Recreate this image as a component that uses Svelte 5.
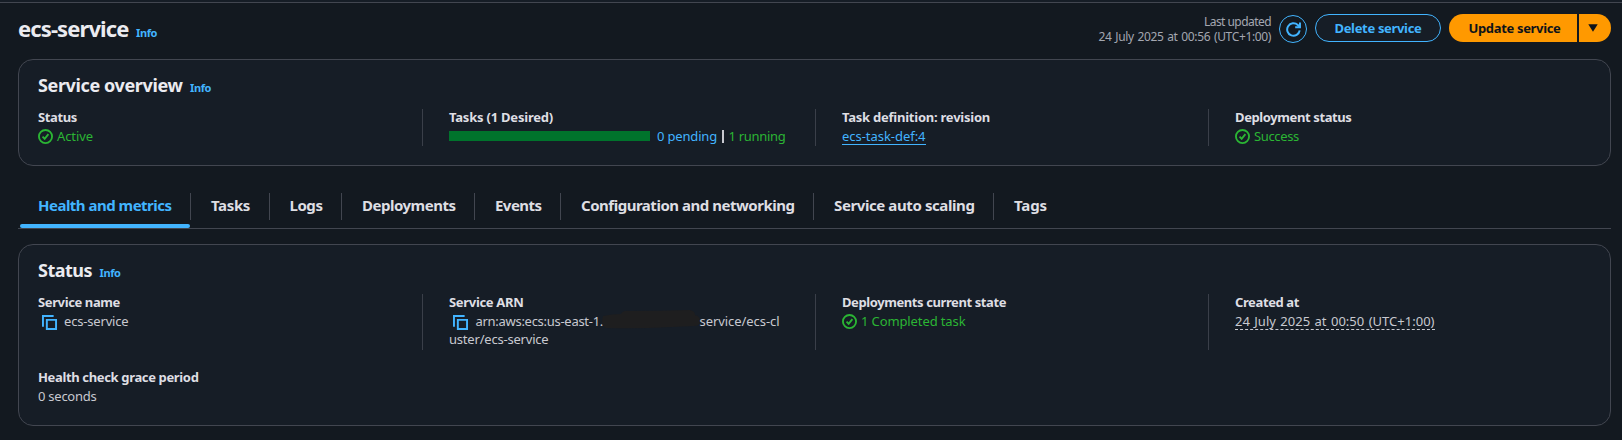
<script>
  const tabs = [
    ['Health and metrics', 133.5], ['Tasks', 39], ['Logs', 33], ['Deployments', 93.5],
    ['Events', 46.5], ['Configuration and networking', 213.5], ['Service auto scaling', 140.5], ['Tags', 33]
  ];

  // Tracks the text so that it fills the given width.
  function fit(node, width) {
    node.style.letterSpacing = '0';
    const natural = node.getBoundingClientRect().width;
    node.style.letterSpacing = (width - natural) / node.textContent.length + 'px';
  }
</script>

{#snippet check()}
  <svg class="check" viewBox="0 0 16 16"><circle cx="8" cy="8" r="7" /><path d="M4.8 8.2l2.3 2.2 4-4.9" /></svg>
{/snippet}
{#snippet copy()}
  <svg class="copy" viewBox="0 0 16 16"><path d="M1 12V1h11M5 5h9.5v9.5H5z" /></svg>
{/snippet}

<div class="page">
  <header>
    <h1><span use:fit={110.5}>ecs-service</span></h1>
    <a class="info title-info"><span use:fit={21}>Info</span></a>
    <div class="updated">
      <div><span use:fit={67}>Last updated</span></div>
      <div><span class="date" use:fit={172.5}>24 July 2025 at 00:56 (UTC+1:00)</span></div>
    </div>
    <button class="refresh" aria-label="Refresh">
      <svg viewBox="0 0 16 16"><path d="M14.6 9A6.7 6.7 0 1 1 12.6 3.2L14.2 4.8" /><path d="M14.9 .6v5.1H9.8" /></svg>
    </button>
    <button class="delete"><span use:fit={87}>Delete service</span></button>
    <button class="update"><span use:fit={92}>Update service</span></button>
    <button class="more" aria-label="More actions"><svg viewBox="0 0 10 8"><path d="M0.3 .3h9.4L5 7.7z" /></svg></button>
  </header>

  <section class="overview">
    <div class="heading"><h2><span use:fit={144.5}>Service overview</span></h2><a class="info"><span use:fit={21}>Info</span></a></div>
    <div class="grid">
      <div class="cell">
        <div class="label"><span use:fit={39}>Status</span></div>
        <div class="value ok">{@render check()}<span use:fit={36}>Active</span></div>
      </div>
      <div class="cell">
        <div class="label"><span use:fit={104}>Tasks (1 Desired)</span></div>
        <div class="value tasks"><i class="bar"></i><span class="blue" use:fit={60}>0 pending</span><i class="sep"></i><span class="green" use:fit={57}>1 running</span></div>
      </div>
      <div class="cell">
        <div class="label"><span use:fit={148}>Task definition: revision</span></div>
        <div class="value"><a class="link"><span use:fit={83.5}>ecs-task-def:4</span></a></div>
      </div>
      <div class="cell">
        <div class="label"><span use:fit={116.5}>Deployment status</span></div>
        <div class="value ok">{@render check()}<span use:fit={45}>Success</span></div>
      </div>
    </div>
  </section>

  <nav>
    {#each tabs as [name, width], i}
      <div class="tab" class:active={i === 0}><span use:fit={width}>{name}</span></div>
    {/each}
  </nav>

  <section class="status">
    <div class="heading"><h2><span use:fit={54}>Status</span></h2><a class="info"><span use:fit={21}>Info</span></a></div>
    <div class="grid">
      <div class="cell">
        <div class="label"><span use:fit={82}>Service name</span></div>
        <div class="value">{@render copy()}<span use:fit={64.5}>ecs-service</span></div>
      </div>
      <div class="cell">
        <div class="label"><span use:fit={74.5}>Service ARN</span></div>
        <div class="value">{@render copy()}<span use:fit={127.5}>arn:aws:ecs:us-east-1.</span><svg class="smudge" viewBox="0 0 98 19"><path d="M1 6Q10 4 19 4Q21 0 28 1Q58 1 88 0Q93 1 93 5Q98 6 98 11Q98 16 92 16L70 17Q35 19 4 18Q0 16 0 11z" /></svg><span use:fit={80}>service/ecs-cl</span></div>
        <div class="value"><span use:fit={99.5}>uster/ecs-service</span></div>
      </div>
      <div class="cell">
        <div class="label"><span use:fit={164}>Deployments current state</span></div>
        <div class="value ok">{@render check()}<span use:fit={104.5}>1 Completed task</span></div>
      </div>
      <div class="cell">
        <div class="label"><span use:fit={64}>Created at</span></div>
        <div class="value"><span class="dashed"><span class="date" use:fit={199.5}>24 July 2025 at 00:50 (UTC+1:00)</span></span></div>
      </div>
    </div>
    <div class="grace">
      <div class="label"><span use:fit={160.5}>Health check grace period</span></div>
      <div class="value"><span use:fit={58.5}>0 seconds</span></div>
    </div>
  </section>
</div>

<style>
  :global(body) { background: #131920; }
  .page {
    box-sizing: border-box; width: 1622px; height: 440px; overflow: hidden;
    padding: 0 11px 0 18px; border-top: 2px solid #161d26;
    background: #131920; color: #c8c9d0;
    font: 13px/18px "Noto Sans", "Open Sans", sans-serif; white-space: nowrap;
  }
  .page::before { content: ""; display: block; height: 1px; margin: 0 -11px 0 -18px; background: #424650; }
  h1, h2 { margin: 0; font-weight: 700; color: #ebebf0; }
  h1 { font-size: 22px; line-height: 30px; }
  h2 { font-size: 18px; line-height: 24px; }
  button { box-sizing: border-box; margin: 0; padding: 0; border: 0; background: none; font: inherit; font-weight: 700; display: flex; align-items: center; justify-content: center; }
  svg { flex: none; fill: none; }
  header { display: flex; height: 56px; }
  header h1 { margin-top: 10px; }
  .info { color: #42b4ff; font-size: 11px; font-weight: 700; line-height: 16px; margin-left: 7.5px; }
  .title-info { margin-top: 22px; }
  .updated { margin: 11px 8px 0 auto; text-align: right; font-size: 12px; line-height: 15px; color: #a4a7b1; }
  .date { word-spacing: 1px; }
  .refresh { width: 28px; height: 28px; margin-top: 12px; border: 1px solid #42b4ff; border-radius: 50%; }
  .refresh svg { width: 15px; height: 15px; stroke: #42b4ff; stroke-width: 2.1; }
  .delete { width: 126px; height: 28px; margin: 11px 0 0 8px; padding-bottom: 1px; border: 1px solid #42b4ff; border-radius: 15px; color: #42b4ff; background: #161d26; }
  .update { width: 128px; height: 28px; margin: 11px 0 0 8px; padding: 0 0 1px 3px; border-radius: 15px 0 0 15px; background: #ff9900; color: #0f141a; }
  .more { width: 32px; height: 28px; margin: 11px 0 0 2px; border-radius: 0 15px 15px 0; background: #ff9900; padding-right: 5px; }
  .more svg { width: 10px; height: 8px; fill: #0f141a; }

  section { box-sizing: border-box; border: 1px solid #424650; border-radius: 15px; background: #161d26; padding: 13px 19px 0; }
  .overview { height: 107px; }
  .heading { display: flex; align-items: flex-start; height: 36px; }
  .heading .info { margin-top: 7px; }
  .grid { display: grid; grid-template-columns: 384px 393px 393px 1fr; }
  .cell { border-left: 1px solid #3a3f49; padding-left: 26px; height: 37px; }
  .cell:first-child { border: 0; padding: 0; }
  .status .cell { height: 56px; }
  .label { height: 19px; margin-top: -1px; color: #dedee3; font-weight: 700; line-height: 18px; }
  .value { display: flex; height: 18px; align-items: center; line-height: 18px; }
  .ok, .green { color: #2bb534; }
  .check { width: 15px; height: 15px; stroke: #2bb534; stroke-width: 2; margin-right: 4px; }
  .copy { width: 15.5px; height: 15.5px; margin: 3px 6.5px 0 4px; stroke: #42b4ff; stroke-width: 2; }
  .cell + .cell .copy { margin-left: 3.5px; margin-right: 7.5px; }
  .bar { width: 201px; height: 10px; margin: 0 7px 0 0; background: #00732c; }
  .blue, .link { color: #42b4ff; }
  .sep { width: 1.5px; height: 13px; margin: 1px 5px 0; background: #c8c9d0; }
  .link { height: 17px; border-bottom: 1px solid #42b4ff; }
  .dashed { height: 17px; border-bottom: 1px dashed #c8c9d0; }
  .smudge { width: 98px; height: 19px; margin: -3px 0 0 -1.5px; fill: #1e1e1f; }

  nav { display: flex; height: 36px; margin-top: 26px; border-bottom: 1px solid #424650; }
  .tab { position: relative; box-sizing: border-box; padding: 0 20px; height: 27px; margin-top: 1px; font-size: 15px; line-height: 25px; font-weight: 700; color: #dedee3; }
  .tab:not(:last-child) { border-right: 1px solid #424650; padding-right: 18.5px; }
  .active { color: #42b4ff; }
  .active::after { content: ""; position: absolute; left: 2px; right: 0; top: 31px; height: 4px; border-radius: 2px; background: #42b4ff; }
  .status { margin-top: 15px; height: 182px; }
  .grace { margin-top: 19px; }
</style>
